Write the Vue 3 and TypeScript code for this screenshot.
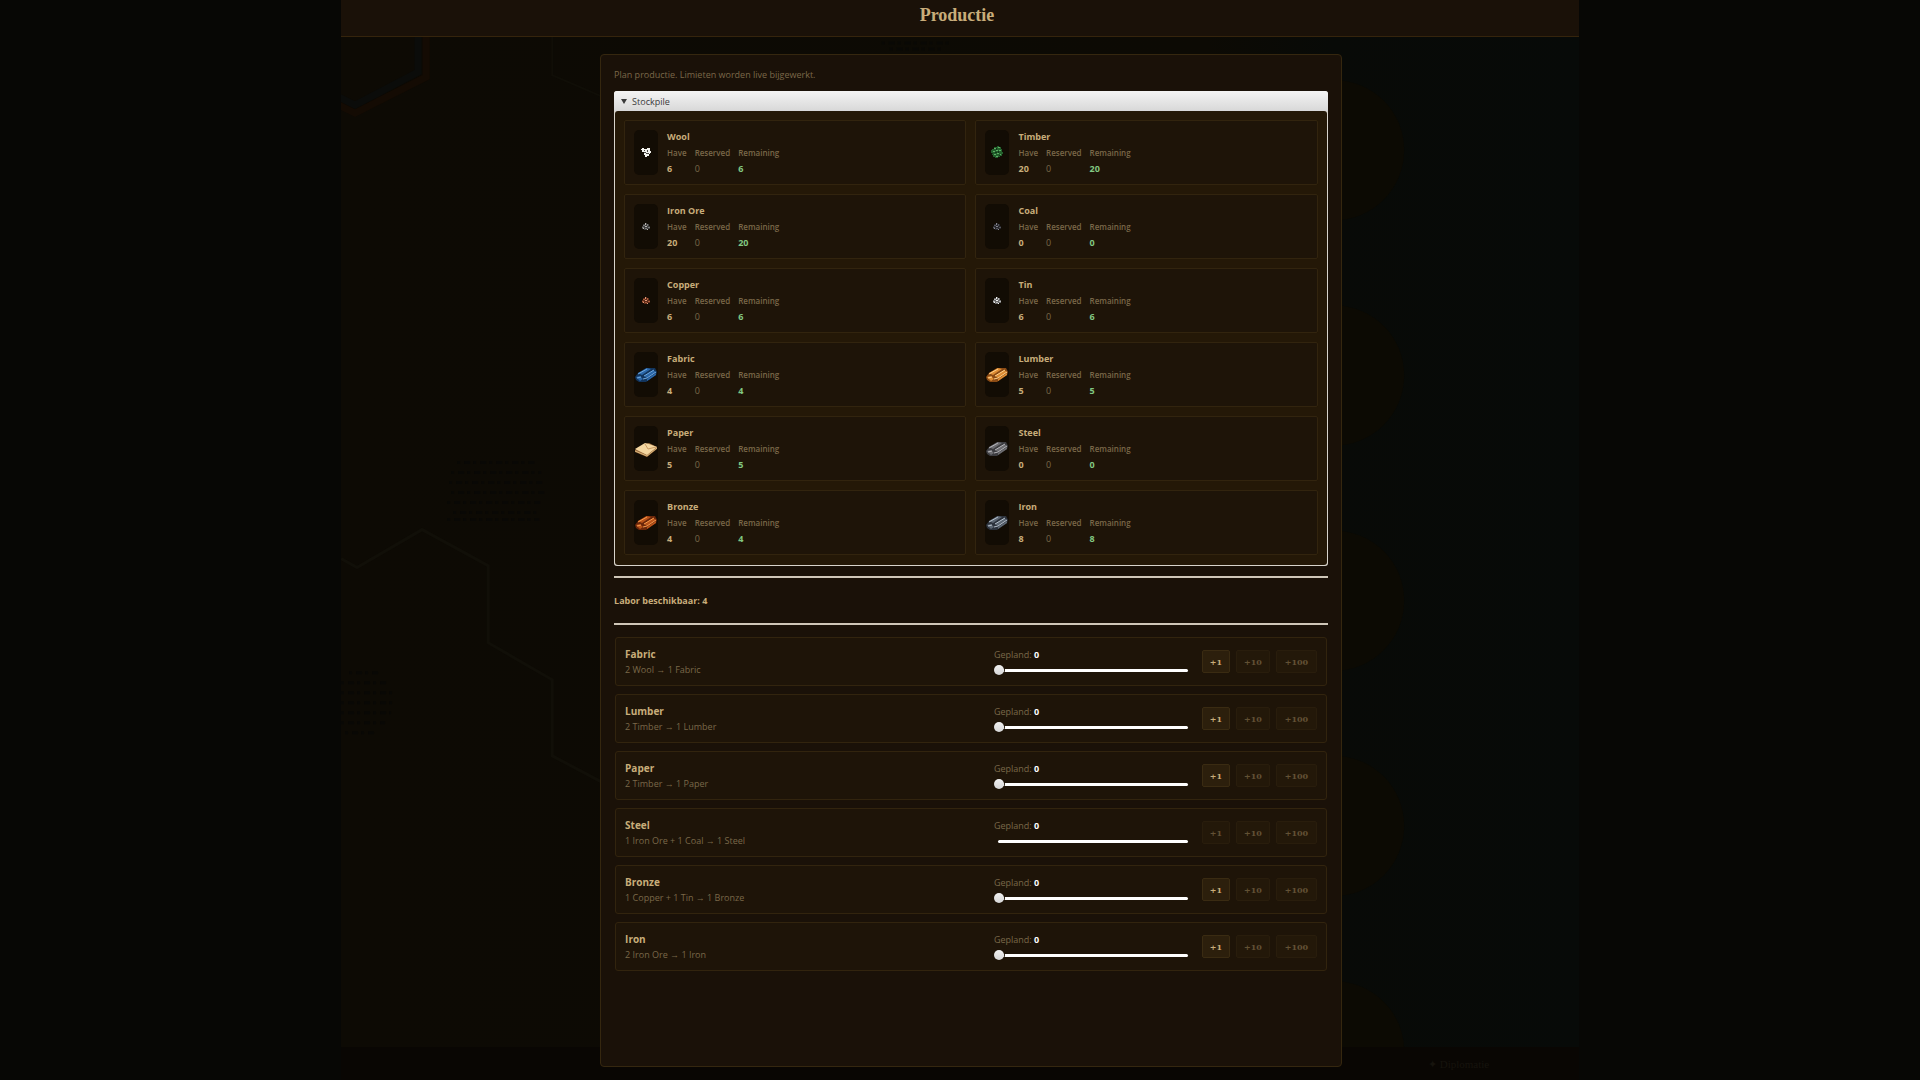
<script setup lang="ts">
import { reactive } from 'vue'

interface Resource {
  id: string
  name: string
  have: number
}

interface Recipe {
  id: string
  name: string
  formula: string
  planned: number
  max: number
}

const resources: Resource[] = [
  { id: 'wool', name: 'Wool', have: 6 },
  { id: 'timber', name: 'Timber', have: 20 },
  { id: 'ore', name: 'Iron Ore', have: 20 },
  { id: 'coal', name: 'Coal', have: 0 },
  { id: 'copper', name: 'Copper', have: 6 },
  { id: 'tin', name: 'Tin', have: 6 },
  { id: 'fabric', name: 'Fabric', have: 4 },
  { id: 'lumber', name: 'Lumber', have: 5 },
  { id: 'paper', name: 'Paper', have: 5 },
  { id: 'steel', name: 'Steel', have: 0 },
  { id: 'bronze', name: 'Bronze', have: 4 },
  { id: 'iron', name: 'Iron', have: 8 },
]

const recipes = reactive<Recipe[]>([
  { id: 'fabric', name: 'Fabric', formula: '2 Wool → 1 Fabric', planned: 0, max: 3 },
  { id: 'lumber', name: 'Lumber', formula: '2 Timber → 1 Lumber', planned: 0, max: 4 },
  { id: 'paper', name: 'Paper', formula: '2 Timber → 1 Paper', planned: 0, max: 4 },
  { id: 'steel', name: 'Steel', formula: '1 Iron Ore + 1 Coal → 1 Steel', planned: 0, max: 0 },
  { id: 'bronze', name: 'Bronze', formula: '1 Copper + 1 Tin → 1 Bronze', planned: 0, max: 4 },
  { id: 'iron', name: 'Iron', formula: '2 Iron Ore → 1 Iron', planned: 0, max: 4 },
])

const steps = [1, 10, 100]

// Dark, mid and light tone of each bundle of bars.
const bars: Record<string, [string, string, string]> = {
  fabric: ['#12345c', '#2a66a8', '#6ea6dc'],
  lumber: ['#8a4a14', '#dd8c34', '#ffd08a'],
  steel: ['#3c3c40', '#6c6c70', '#b4b4b8'],
  bronze: ['#6a260a', '#b8521a', '#f79a4c'],
  iron: ['#2c323c', '#5c6672', '#b4bfca'],
}

// Dark, mid and light tone of each small heap.
const heaps: Record<string, [string, string, string]> = {
  ore: ['#3e3e3e', '#7c7a78', '#b8b4b0'],
  coal: ['#26262a', '#55555c', '#85858e'],
  copper: ['#5c2a18', '#a85c3c', '#e09a78'],
  tin: ['#6a6a6a', '#b8b8b8', '#f0f0f0'],
}
</script>

<template>
  <div class="screen">
    <div class="stage">
      <div class="backdrop" aria-hidden="true">
        <svg class="map" viewBox="0 0 1237 1047" preserveAspectRatio="xMidYMin slice">
          <defs>
            <linearGradient id="terrain" x1="0" x2="1" y1="0" y2="0">
              <stop offset="0" stop-color="#0d0a04" />
              <stop offset="0.7" stop-color="#0c0a04" />
              <stop offset="0.8" stop-color="#080a07" />
              <stop offset="1" stop-color="#070a08" />
            </linearGradient>
          </defs>
          <rect width="1237" height="1047" fill="url(#terrain)" />
          <g fill="#0c0a03">
            <circle v-for="n in 5" :key="n" cx="992" :cy="n * 225 - 75" r="70" />
          </g>
          <path d="M85 30V77L14 113L-4 104" fill="none" stroke="#140b03" stroke-width="7" />
          <path d="M77 30V72L14 105L-4 96" fill="none" stroke="#0b0c0a" stroke-width="7" />
          <path d="M211 30V75L262 97" fill="none" stroke="#100e07" stroke-width="2" />
          <path d="M0 558L16 567L81 529L147 565V642L211 679V755L262 782" fill="none" stroke="#110f08" stroke-width="3" />
          <g fill="none" stroke="#090805" stroke-width="3" stroke-dasharray="3 4 6 3">
            <path d="M116 462H194M110 472H200M108 482H204M110 492H204M106 502H202M112 512H196M106 519H198" />
            <path d="M8 672H40M0 682H48M0 692H54M0 702H54M0 712H50M0 722H44M4 732H36" />
            <path d="M540 43H608M548 49H602" />
          </g>
        </svg>
        <div class="footer"><span>✦ Diplomatie</span></div>
      </div>

      <header class="topbar">
        <h1>Productie</h1>
      </header>

      <main class="content">
        <section class="panel">
          <p class="hint">Plan productie. Limieten worden live bijgewerkt.</p>

          <details class="stock" open>
            <summary>Stockpile</summary>
            <div class="stock-grid">
              <article v-for="r in resources" :key="r.id" class="card">
                <div class="icon">
                  <svg viewBox="0 0 24 24" width="24" height="24" aria-hidden="true">
                    <g v-if="r.id === 'wool'" fill="#f2f2ee">
                      <path d="M8 7h2v1h3V7h3v3h1v2h-1v1h-1v2h-2v1h-2v-2h-1v-3H8V9h-1V8h1z" />
                      <path d="M10 9h1v1h-1zM13 9h1v2h-1zM12 12h3v1h-3zM10 11h2v1h-2z" fill="#4a4844" />
                    </g>
                    <g v-else-if="r.id === 'timber'">
                      <path d="M9 6h3V5h2v1h2v2h1v3h1v2h-1v2h-2v1h-2v1h-3v-1H8v-2H7v-2H6V9h1V8h2z" fill="#23602c" />
                      <path d="M9 7h2v1H9zM13 6h2v1h-2zM8 10h2v1H8zM11 9h2v1h-2zM14 9h2v1h-2zM9 13h2v1H9zM12 12h2v1h-2zM15 13h1v1h-1zM11 15h2v1h-2z" fill="#5cae64" />
                      <path d="M11 7h1v2h-1zM10 11h2v1h-2zM13 10h1v2h-1zM7 12h1v1H7zM14 14h1v1h-1z" fill="#12381a" />
                    </g>
                    <g v-else-if="heaps[r.id]">
                      <path d="M11 8h2v1h2v2h1v3h-2v1h-4v-1H8v-3h1V9h2z" :fill="heaps[r.id][0]" />
                      <path d="M9 10h2v1H9zM13 9h1v2h-1zM8 12h2v1H8zM11 13h2v1h-2zM14 12h2v1h-2z" :fill="heaps[r.id][1]" />
                      <path d="M11 8h1v2h-1zM11 11h2v1h-2zM13 14h1v1h-1zM9 13h1v1H9z" :fill="heaps[r.id][2]" />
                    </g>
                    <g v-else-if="r.id === 'paper'">
                      <path d="M1 13L11 7L15 6L23 10V12L13 20L1 15Z" fill="#9a6c3c" />
                      <path d="M1 12L11 6L15 7L23 10L13 18Z" fill="#f4d6a0" />
                      <path d="M1 14L13 19L23 11" fill="none" stroke="#d8b47c" />
                      <path d="M11 7L14 12L22 10" fill="none" stroke="#c89a62" />
                    </g>
                    <g v-else-if="bars[r.id]">
                      <path d="M1 14L4 10L12 5L21 5L23 9L22 12L12 19L5 19L2 17Z" :fill="bars[r.id][0]" />
                      <path d="M4 10L13 5L17 6L8 12ZM10 13L19 7L22 9L13 15ZM2 14L6 13L9 16L6 18ZM13 16L22 10V12L13 18Z" :fill="bars[r.id][1]" />
                      <path d="M4 11L13 6M10 13L20 7M3 15L7 14M9 16L13 15L22 9" fill="none" :stroke="bars[r.id][2]" />
                    </g>
                  </svg>
                </div>
                <div class="card-body">
                  <h2>{{ r.name }}</h2>
                  <dl>
                    <div>
                      <dt>Have</dt>
                      <dd class="have">{{ r.have }}</dd>
                    </div>
                    <div>
                      <dt>Reserved</dt>
                      <dd>0</dd>
                    </div>
                    <div>
                      <dt>Remaining</dt>
                      <dd class="remaining">{{ r.have }}</dd>
                    </div>
                  </dl>
                </div>
              </article>
            </div>
          </details>

          <p class="labor">Labor beschikbaar: 4</p>

          <div class="recipes">
            <article v-for="p in recipes" :key="p.id" class="recipe">
              <div class="info">
                <h2>{{ p.name }}</h2>
                <p>{{ p.formula }}</p>
              </div>
              <div class="plan">
                <label :for="'plan-' + p.id">Gepland: <output>{{ p.planned }}</output></label>
                <input
                  :id="'plan-' + p.id"
                  v-model.number="p.planned"
                  type="range"
                  min="0"
                  :max="p.max || 1"
                  :disabled="p.max === 0"
                />
              </div>
              <div class="steps">
                <button
                  v-for="s in steps"
                  :key="s"
                  type="button"
                  :class="'step-' + s"
                  :disabled="p.planned + s > p.max"
                  @click="p.planned += s"
                >+{{ s }}</button>
              </div>
            </article>
          </div>
        </section>
      </main>
    </div>
  </div>
</template>

<style>
body {
  margin: 0;
  background: #070705;
}
</style>

<style scoped>
.screen {
  font-family: "Open Sans", "Noto Sans", sans-serif;
  font-size: 9px;
  color: #7a6848;
  background: #070705;
}
h1, h2, p, dl, dd { margin: 0; }

.stage {
  position: relative;
  display: flex;
  flex-direction: column;
  width: 64.5%;
  min-height: 100vh;
  margin: 0 auto;
}
.backdrop {
  position: absolute;
  inset: 0;
  display: flex;
  flex-direction: column;
}
.map {
  flex: 1;
  min-height: 0;
  width: 100%;
}
.footer {
  display: flex;
  justify-content: flex-end;
  align-items: center;
  height: 33px;
  padding-right: 90px;
  background: #090603;
  color: #16130d;
  font: 11px/16px "Liberation Serif", serif;
}
.topbar {
  position: relative;
  box-sizing: border-box;
  height: 37px;
  padding: 5px 6px 0 0;
  background: #1a1108;
  border-bottom: 1px solid #35240c;
  text-align: center;
}
h1 {
  font: bold 18px/20px "Liberation Serif", serif;
  color: #c8ad7a;
}
.content {
  position: relative;
  flex: 1;
  display: grid;
  grid-template-columns: 259fr 741fr 237fr;
  padding: 17px 0 13px;
}
.panel {
  grid-column: 2;
  box-sizing: border-box;
  padding: 14px 13px;
  background: #1a1108;
  border: 1px solid #35270f;
  border-radius: 4px;
}
.hint { line-height: 12px; }

.stock {
  margin-top: 10px;
  border-radius: 3px;
  background: #d8d4cc;
  overflow: hidden;
}
summary {
  display: flex;
  align-items: center;
  gap: 5px;
  height: 20px;
  padding-left: 7px;
  background: linear-gradient(#f4f4f4, #d8d8d8);
  color: #3a3a3a;
  list-style: none;
}
summary::before {
  content: "";
  border: 3px solid transparent;
  border-top: 5px solid #3a3a3a;
  border-bottom: 0;
}
.stock-grid {
  display: grid;
  grid-template-columns: 1fr 1fr;
  gap: 9px;
  margin: 0 1px 1px;
  padding: 9px 9px 10px;
  background: #241807;
  border-radius: 3px;
}
.card {
  display: flex;
  gap: 9px;
  box-sizing: border-box;
  height: 65px;
  padding: 9px;
  background: #1e1408;
  border: 1px solid #32240e;
  border-radius: 2px;
}
.icon {
  display: flex;
  align-items: center;
  width: 24px;
  height: 45px;
  border-radius: 5px;
  background: #120c04;
}
.card h2 {
  font-size: 9px;
  line-height: 13px;
  font-weight: 700;
  color: #c8ad7a;
}
dl {
  display: flex;
  gap: 8px;
}
dt {
  margin-top: 2px;
  font-size: 8px;
  line-height: 16px;
  font-weight: 600;
}
dd { line-height: 15px; }
.have {
  font-weight: 700;
  color: #c8ad7a;
}
.remaining {
  font-weight: 700;
  color: #82c882;
}
.labor {
  margin: 10px 0 12px;
  padding: 14px 0;
  border: solid #cfc6b8;
  border-width: 2px 0;
  font-size: 9px;
  line-height: 17px;
  font-weight: 700;
  color: #c8ad7a;
}
.recipes {
  display: grid;
  gap: 8px;
  margin: 0 1px;
}
.recipe {
  display: flex;
  align-items: center;
  box-sizing: border-box;
  height: 49px;
  padding: 0 9px;
  background: #1e1408;
  border: 1px solid #32240e;
  border-radius: 3px;
}
.info { flex: 1; }
.info h2 {
  font-size: 10px;
  line-height: 16px;
  color: #c8ad7a;
}
.info p { line-height: 15px; }
.plan {
  display: flex;
  flex-direction: column;
  gap: 3px;
  width: 194px;
  margin-right: 14px;
}
.plan label { line-height: 14px; }
.plan output {
  font-weight: 700;
  color: #ffffff;
}
.plan input {
  appearance: none;
  height: 11px;
  margin: 0 0 0 4px;
  background: transparent;
}
.plan input::-webkit-slider-runnable-track {
  height: 3px;
  border-radius: 2px;
  background: #ffffff;
}
.plan input::-webkit-slider-thumb {
  appearance: none;
  width: 10px;
  height: 10px;
  margin: -4px 0 0 -4px;
  border-radius: 50%;
  background: linear-gradient(#f0f0f0, #d6d6d6);
  box-shadow: 0 0 0 1px #1e1408;
}
.plan input:disabled::-webkit-slider-thumb { visibility: hidden; }
.steps {
  display: flex;
  gap: 6px;
}
.steps button {
  height: 23px;
  padding: 0;
  background: #2c1f0c;
  border: 1px solid #3a2b12;
  border-radius: 2px;
  font: bold 8px/16px "DejaVu Serif", serif;
  color: #c8ad7a;
}
.steps .step-1 { width: 28px; }
.steps .step-10 { width: 34px; }
.steps .step-100 { width: 41px; }
.steps button:disabled { opacity: 0.4; }
</style>
